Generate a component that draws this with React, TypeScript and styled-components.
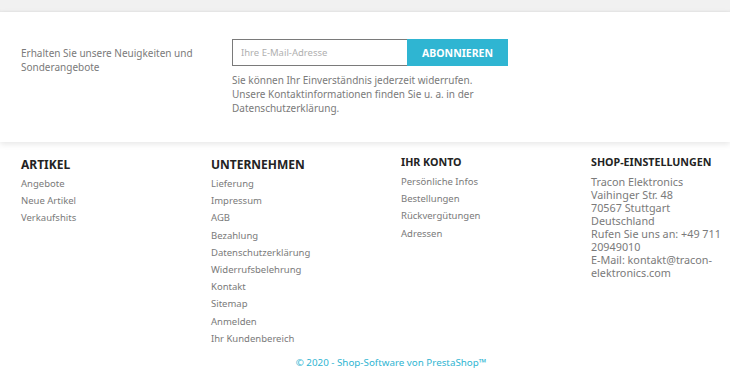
import React from 'react';
import styled, { createGlobalStyle } from 'styled-components';

const GlobalStyle = createGlobalStyle`
	body {
		margin: 0;
		background: #fff;
		font-family: 'Noto Sans', 'Open Sans', sans-serif;
		color: #7a7a7a;
	}
`;

const TopBar = styled.div`
	height: 12px;
	background: #f1f1f1;
	box-shadow: inset 0 -2px 3px -2px rgba(0, 0, 0, 0.08);
`;
const Newsletter = styled.section`
	display: flex;
	gap: 21px;
	padding: 27px 0 27px 21px;
	background: #fff;
	box-shadow: 0 2px 6px 0 rgba(0, 0, 0, 0.1);
	position: relative;
`;
const NewsletterLabel = styled.p`
	width: 190px;
	margin: 7px 0 0;
	font-size: 10px;
	line-height: 14px;
	color: #7a7a7a;
`;
const FormBlock = styled.div`
	display: flex;
	flex-direction: column;
`;
const InputRow = styled.div`
	display: flex;
	height: 27px;
`;
const EmailInput = styled.input`
	box-sizing: border-box;
	width: 175px;
	height: 27px;
	margin: 0;
	padding: 0 8px;
	border: 1px solid #7a7a7a;
	border-right: none;
	font-family: inherit;
	font-size: 9.5px;
	outline: none;

	&::placeholder {
		color: #b0b0b0;
	}
`;
const SubscribeButton = styled.button`
	width: 101px;
	height: 27px;
	margin: 0;
	padding: 0;
	border: none;
	background: #2fb5d2;
	color: #fff;
	font-family: inherit;
	font-weight: 700;
	font-size: 10.5px;
	cursor: pointer;
`;
const Hint = styled.p`
	margin: 7px 0 0;
	width: 250px;
	font-size: 10px;
	line-height: 14px;
	color: #7a7a7a;
`;
const Footer = styled.footer`
	padding: 15px 0 10px;
	background: #fff;
`;
const Columns = styled.div`
	display: grid;
	grid-template-columns: 190px 190px 190px 139px;
	padding-left: 21px;
`;
const Column = styled.div`
	display: flex;
	flex-direction: column;
`;
const Heading = styled.h4<{ $small?: boolean }>`
	margin: 0 0 ${(p) => (p.$small ? '6px' : '2px')};
	height: ${(p) => (p.$small ? '10px' : '16px')};
	font-size: ${(p) => (p.$small ? '10.7px' : '12px')};
	line-height: ${(p) => (p.$small ? '10px' : '16px')};
	font-weight: 700;
	color: #232323;
	text-transform: uppercase;
	white-space: nowrap;
`;
const LinkItem = styled.a`
	display: block;
	font-size: 9.5px;
	line-height: 17.2px;
	color: #7a7a7a;
	text-decoration: none;
`;
const ContactText = styled.div`
	margin-top: 2px;
	font-size: 10.8px;
	line-height: 13px;
	color: #7a7a7a;
`;
const Copyright = styled.p`
	margin: 9px 0 0;
	padding-left: 52px;
	text-align: center;
	font-size: 9.8px;
	line-height: 14px;
	color: #2fb5d2;
`;

const articles = ['Angebote', 'Neue Artikel', 'Verkaufshits'];
const company = [
	'Lieferung',
	'Impressum',
	'AGB',
	'Bezahlung',
	'Datenschutzerklärung',
	'Widerrufsbelehrung',
	'Kontakt',
	'Sitemap',
	'Anmelden',
	'Ihr Kundenbereich',
];
const account = ['Persönliche Infos', 'Bestellungen', 'Rückvergütungen', 'Adressen'];

const App: React.FC = () => {
	return (
		<>
			<GlobalStyle />
			<TopBar />
			<Newsletter>
				<NewsletterLabel>Erhalten Sie unsere Neuigkeiten und Sonderangebote</NewsletterLabel>
				<FormBlock>
					<InputRow>
						<EmailInput type="email" placeholder="Ihre E-Mail-Adresse" />
						<SubscribeButton>ABONNIEREN</SubscribeButton>
					</InputRow>
					<Hint>
						Sie können Ihr Einverständnis jederzeit widerrufen. Unsere Kontaktinformationen finden Sie
						u. a. in der Datenschutzerklärung.
					</Hint>
				</FormBlock>
			</Newsletter>
			<Footer>
				<Columns>
					<Column>
						<Heading>Artikel</Heading>
						{articles.map((a) => (
							<LinkItem key={a} href="#">
								{a}
							</LinkItem>
						))}
					</Column>
					<Column>
						<Heading>Unternehmen</Heading>
						{company.map((a) => (
							<LinkItem key={a} href="#">
								{a}
							</LinkItem>
						))}
					</Column>
					<Column>
						<Heading $small>Ihr Konto</Heading>
						{account.map((a) => (
							<LinkItem key={a} href="#">
								{a}
							</LinkItem>
						))}
					</Column>
					<Column>
						<Heading $small>Shop-Einstellungen</Heading>
						<ContactText>
							Tracon Elektronics
							<br />
							Vaihinger Str. 48
							<br />
							70567 Stuttgart
							<br />
							Deutschland
							<br />
							Rufen Sie uns an: +49 711 20949010
							<br />
							E-Mail: kontakt@tracon-elektronics.com
						</ContactText>
					</Column>
				</Columns>
				<Copyright>© 2020 - Shop-Software von PrestaShop™</Copyright>
			</Footer>
		</>
	);
};

export default App;
